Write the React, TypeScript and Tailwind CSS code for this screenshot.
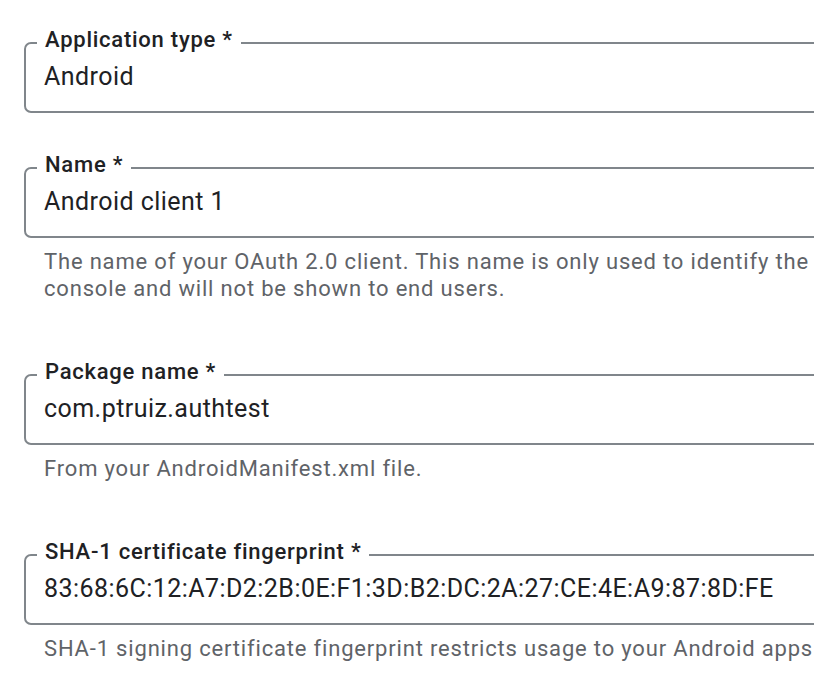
import React from "react";

type FieldProps = {
  label: string;
  value: string;
  helper?: string[];
};

function Field({ label, value, helper }: FieldProps) {
  return (
    <div className="flex flex-col">
      <div className="relative w-[1000px] rounded-[7px] border-2 border-[#80868b] pl-[18px] pt-[19px] pb-[20px]">
        <span className="absolute left-[11px] top-[-16px] bg-white px-[8px] text-[22px] leading-[24px] font-medium tracking-[0.75px] text-[#202124] whitespace-nowrap">
          {label}
        </span>
        <div className="text-[25px] leading-[28px] tracking-[0.45px] text-[#202124] whitespace-nowrap">
          {value}
        </div>
      </div>
      {helper && (
        <div className="pt-[10px] pb-[18px] pl-[20px] text-[22px] leading-[27px] tracking-[0.82px] text-[#5f6368]">
          {helper.map((line) => (
            <div key={line} className="whitespace-nowrap">
              {line}
            </div>
          ))}
        </div>
      )}
    </div>
  );
}

export default function App() {
  return (
    <div
      className="w-[814px] h-[676px] overflow-hidden bg-white"
      style={{ fontFamily: "Roboto, 'Noto Sans', Arial, sans-serif" }}
    >
      <div className="flex flex-col gap-[54px] pt-[42px] pl-[24px]">
        <Field label="Application type *" value="Android" />
        <Field
          label="Name *"
          value="Android client 1"
          helper={[
            "The name of your OAuth 2.0 client. This name is only used to identify the",
            "console and will not be shown to end users.",
          ]}
        />
        <Field
          label="Package name *"
          value="com.ptruiz.authtest"
          helper={["From your AndroidManifest.xml file."]}
        />
        <Field
          label="SHA-1 certificate fingerprint *"
          value="83:68:6C:12:A7:D2:2B:0E:F1:3D:B2:DC:2A:27:CE:4E:A9:87:8D:FE"
          helper={[
            "SHA-1 signing certificate fingerprint restricts usage to your Android apps",
          ]}
        />
      </div>
    </div>
  );
}
